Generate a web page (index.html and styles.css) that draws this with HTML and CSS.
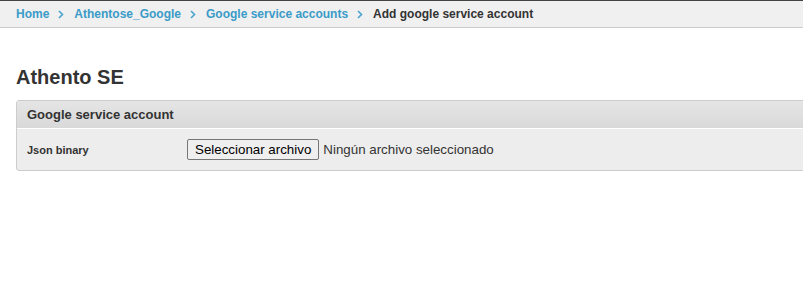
FILE: index.html
```html
<!DOCTYPE html>
<html>
<head>
    <title>Add google service account</title>
    <link rel="stylesheet" href="styles.css">
</head>
<body>
    <div class="breadcrumbs">
        <a href="#" class="crumb">Home</a>
        <svg class="sep" width="6" height="9" viewBox="0 0 6 9"><path d="M1 1 L4.5 4.5 L1 8" fill="none" stroke="#4ba3cd" stroke-width="1.6"/></svg>
        <a href="#" class="crumb">Athentose_Google</a>
        <svg class="sep" width="6" height="9" viewBox="0 0 6 9"><path d="M1 1 L4.5 4.5 L1 8" fill="none" stroke="#4ba3cd" stroke-width="1.6"/></svg>
        <a href="#" class="crumb">Google service accounts</a>
        <svg class="sep" width="6" height="9" viewBox="0 0 6 9"><path d="M1 1 L4.5 4.5 L1 8" fill="none" stroke="#4ba3cd" stroke-width="1.6"/></svg>
        <span class="current">Add google service account</span>
    </div>

    <div class="content">
        <h1>Athento SE</h1>
        <div class="panel">
            <div class="panel-header">Google service account</div>
            <div class="panel-body">
                <label class="field-label">Json binary</label>
                <div class="file-field">
                    <button type="button" class="file-button">Seleccionar archivo</button>
                    <span class="file-name">Ningún archivo seleccionado</span>
                </div>
            </div>
        </div>
    </div>
</body>
</html>
```

FILE: styles.css
```css
html, body {
    margin: 0;
    padding: 0;
    overflow: hidden;
}

body {
    font-family: "Liberation Sans", Arial, sans-serif;
    color: #333;
    background-color: #fff;
}

.breadcrumbs {
    display: flex;
    align-items: center;
    height: 26px;
    padding: 0 16px;
    background-color: #f0f0f0;
    border-top: 1px solid #444;
    border-bottom: 1px solid #ccc;
    font-size: 12px;
    font-weight: bold;
}

.crumb {
    color: #3a9bc8;
    text-decoration: none;
}

.sep {
    margin: 1px 10px 0 9px;
}

.current {
    color: #333;
}

.content {
    padding: 37px 0 0 16px;
}

h1 {
    margin: 0 0 11px 0;
    font-size: 20px;
    font-weight: bold;
    color: #333;
    line-height: 24px;
}

.panel {
    margin-right: -20px;
    border: 1px solid #ccc;
    border-radius: 3px;
    background-color: #ededed;
}

.panel-header {
    height: 27px;
    line-height: 27px;
    padding-left: 10px;
    font-size: 13px;
    font-weight: bold;
    color: #333;
    background: linear-gradient(#e5e5e5, #d9d9d9);
    border-bottom: 1px solid #fff;
}

.panel-body {
    display: flex;
    align-items: center;
    height: 41px;
    padding-left: 10px;
}

.field-label {
    width: 160px;
    font-size: 11px;
    font-weight: bold;
    color: #333;
}

.file-field {
    display: flex;
    align-items: center;
    font-size: 13.333px;
}

.file-button {
    font-family: "Liberation Sans", Arial, sans-serif;
    font-size: 13.333px;
    color: #000;
    height: 21px;
    padding: 0 7px;
    background-color: #efefef;
    border: 1px solid #767676;
    border-radius: 2px;
}

.file-name {
    margin-left: 4px;
    color: #333;
}
```
